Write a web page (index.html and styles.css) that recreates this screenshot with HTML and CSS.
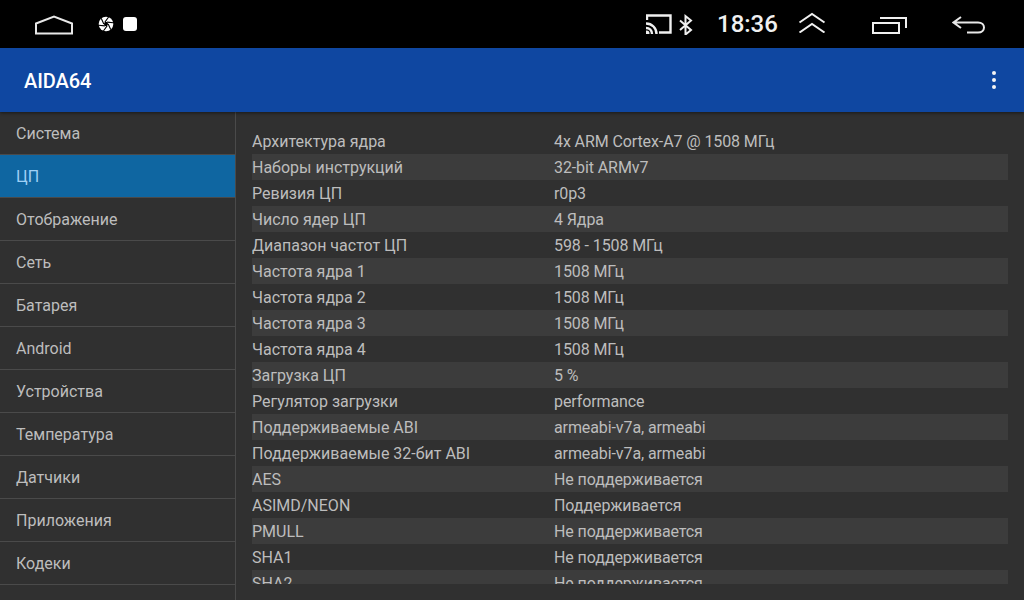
FILE: index.html
```html
<!DOCTYPE html>
<html lang="ru">
<head>
<meta charset="utf-8">
<title>AIDA64</title>
<link rel="stylesheet" href="styles.css">
</head>
<body>
<div class="app">
  <header class="status">
    <svg class="ic home" width="38" height="20" viewBox="0 0 38 20"><path d="M1 18.500V8.500L19 1.500 37 8.500v10z"/></svg>
    <svg class="ic aperture" width="16" height="16" viewBox="0 0 16 16"><circle class="solid" cx="8" cy="8" r="7.300"/><path class="cut" d="M10.200 8 12.800 13.700M9.100 9.900 5.400 15M6.900 9.900 .6 9.300M5.800 8 3.200 2.300M6.900 6.100 10.600 1M9.100 6.100 15.400 6.700"/><path class="hole" d="M10.200 8 9.100 9.900H6.900L5.800 8 6.900 6.100H9.100z"/></svg>
    <span class="stopbox"></span>
    <span class="spacer"></span>
    <svg class="ic cast" width="26" height="20" viewBox="0 0 26 20"><path class="thick" d="M1 6V1.500h23.500v17H13"/><path class="thick" d="M0 9.500c6 0 10.500 4.500 10.500 10.500M0 14c3.500 0 6 2.500 6 6"/><circle class="wedge" cx=".5" cy="19.500" r="3"/></svg>
    <svg class="ic bt" width="14" height="22" viewBox="0 0 14 22"><path class="thick" d="M1 7.500 12 17l-5.500 4.500V3L12 7.500 1 17"/></svg>
    <span class="clock">18:36</span>
    <svg class="ic chev" width="28" height="22" viewBox="0 0 28 22"><path class="thick" d="M1.500 11.500 14 3l12.500 8.500M1.500 21.500 14 13l12.500 8.500"/></svg>
    <svg class="ic recent" width="36" height="18" viewBox="0 0 36 18"><path class="thick" d="M1 7h26v10H1zM8 2h26v10"/></svg>
    <svg class="ic back" width="34" height="18" viewBox="0 0 34 18"><path d="M9 1 1.500 6.500 9 12M1.500 6.500H26c8 0 8 10 0 10H15"/></svg>
  </header>
  <div class="toolbar">
    <h1 class="title">AIDA64</h1>
    <div class="menu"><i></i><i></i><i></i></div>
  </div>
  <div class="body">
    <nav class="side">
      <div class="item">Система</div>
      <div class="item sel">ЦП</div>
      <div class="item">Отображение</div>
      <div class="item">Сеть</div>
      <div class="item">Батарея</div>
      <div class="item">Android</div>
      <div class="item">Устройства</div>
      <div class="item">Температура</div>
      <div class="item">Датчики</div>
      <div class="item">Приложения</div>
      <div class="item">Кодеки</div>
    </nav>
    <main class="main">
      <div class="list">
        <div class="row"><span class="k">Архитектура ядра</span><span class="v">4x ARM Cortex-A7 @ 1508 МГц</span></div>
        <div class="row"><span class="k">Наборы инструкций</span><span class="v">32-bit ARMv7</span></div>
        <div class="row"><span class="k">Ревизия ЦП</span><span class="v">r0p3</span></div>
        <div class="row"><span class="k">Число ядер ЦП</span><span class="v">4 Ядра</span></div>
        <div class="row"><span class="k">Диапазон частот ЦП</span><span class="v">598 - 1508 МГц</span></div>
        <div class="row"><span class="k">Частота ядра 1</span><span class="v">1508 МГц</span></div>
        <div class="row"><span class="k">Частота ядра 2</span><span class="v">1508 МГц</span></div>
        <div class="row"><span class="k">Частота ядра 3</span><span class="v">1508 МГц</span></div>
        <div class="row"><span class="k">Частота ядра 4</span><span class="v">1508 МГц</span></div>
        <div class="row"><span class="k">Загрузка ЦП</span><span class="v">5 %</span></div>
        <div class="row"><span class="k">Регулятор загрузки</span><span class="v">performance</span></div>
        <div class="row"><span class="k">Поддерживаемые ABI</span><span class="v">armeabi-v7a, armeabi</span></div>
        <div class="row"><span class="k">Поддерживаемые 32-бит ABI</span><span class="v">armeabi-v7a, armeabi</span></div>
        <div class="row"><span class="k">AES</span><span class="v">Не поддерживается</span></div>
        <div class="row"><span class="k">ASIMD/NEON</span><span class="v">Поддерживается</span></div>
        <div class="row"><span class="k">PMULL</span><span class="v">Не поддерживается</span></div>
        <div class="row"><span class="k">SHA1</span><span class="v">Не поддерживается</span></div>
        <div class="row"><span class="k">SHA2</span><span class="v">Не поддерживается</span></div>
      </div>
    </main>
  </div>
</div>
</body>
</html>
```
FILE: styles.css
```css
* { box-sizing: border-box; }
html, body { margin: 0; height: 100%; }
body { font-family: Roboto, "Noto Sans", sans-serif; background: #303030; overflow: hidden; }
.app { width: 1024px; height: 600px; display: flex; flex-direction: column; }

.status { height: 48px; flex: none; background: #000; display: flex; align-items: center; padding-left: 35px; }
.spacer { flex: 1; }
.ic { flex: none; display: block; fill: none; stroke: #e8e8e8; stroke-width: 2; }
.ic .thick { stroke: #f0f0f0; stroke-width: 2; }
.home { margin-top: 2px; }
.aperture { margin-left: 25px; stroke: none; }
.aperture .solid { fill: #fff; stroke: none; }
.aperture .cut { stroke: #000; stroke-width: 1.1; }
.aperture .hole { fill: #000; stroke: none; }
.stopbox { width: 14px; height: 14px; margin-left: 9px; background: #fff; border-radius: 3px; }
.cast .thick { stroke-width: 2.4; }
.cast .wedge { fill: #f0f0f0; stroke: none; }
.bt { margin-left: 7px; }
.clock { margin-left: 24px; color: #f0f0f0; font-size: 24px; line-height: 28px; font-weight: 500; width: 60px; }
.chev { margin-left: 21px; margin-right: 2px; margin-top: -4px; }
.recent { margin-left: 44px; margin-top: 1px; }
.back { margin-left: 44px; margin-right: 38px; margin-top: 2px; }

.toolbar { height: 64px; flex: none; background: #0f47a1; display: flex; align-items: center; justify-content: space-between; padding: 0 28px 0 24px; box-shadow: 0 1px 3px rgba(0,0,0,.5); position: relative; }
.title { margin: 2px 0 0; color: #fff; font-size: 20px; font-weight: 500; letter-spacing: -.1px; }
.menu { display: flex; flex-direction: column; gap: 3px; }
.menu i { display: block; width: 4px; height: 4px; border-radius: 50%; background: #f4f4f4; }

.body { flex: 1; display: flex; min-height: 0; }
.side { width: 236px; flex: none; border-right: 1px solid #4a4a4a; }
.item { height: 43px; padding-left: 16px; display: flex; align-items: center; font-size: 16px; color: #bdbdbd; border-bottom: 1px solid #4a4a4a; }
.item.sel { background: #0f66a1; color: #9fd0f5; }

.main { flex: 1; min-width: 0; padding: 16px; }
.list { height: 100%; overflow: hidden; }
.row { height: 26px; display: flex; align-items: center; font-size: 16px; color: #bdbdbd; }
.row:nth-child(even) { background: #3c3c3c; }
.k { width: 302px; flex: none; }
.v { letter-spacing: -.1px; }
```
